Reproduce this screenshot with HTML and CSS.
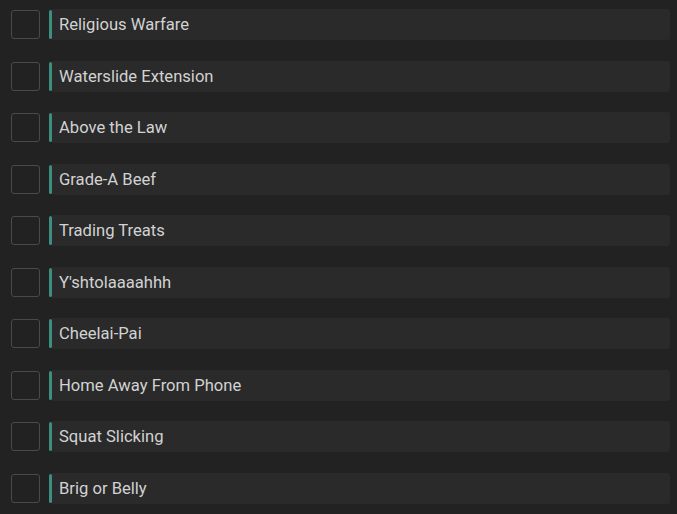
FILE: index.html
```html
<!DOCTYPE html>
<html>
<head>
<meta charset="utf-8">
<link rel="stylesheet" href="styles.css">
</head>
<body>
<ul class="list">
  <li class="row"><span class="check"></span><div class="card">Religious Warfare</div></li>
  <li class="row"><span class="check"></span><div class="card">Waterslide Extension</div></li>
  <li class="row"><span class="check"></span><div class="card">Above the Law</div></li>
  <li class="row"><span class="check"></span><div class="card">Grade-A Beef</div></li>
  <li class="row"><span class="check"></span><div class="card">Trading Treats</div></li>
  <li class="row"><span class="check"></span><div class="card">Y'shtolaaaahhh</div></li>
  <li class="row"><span class="check"></span><div class="card">Cheelai-Pai</div></li>
  <li class="row"><span class="check"></span><div class="card">Home Away From Phone</div></li>
  <li class="row"><span class="check"></span><div class="card">Squat Slicking</div></li>
  <li class="row"><span class="check"></span><div class="card">Brig or Belly</div></li>
</ul>
</body>
</html>
```
FILE: styles.css
```css
html, body {
  margin: 0;
  padding: 0;
  background: #222222;
}
body {
  font-family: Roboto, "Liberation Sans", sans-serif;
}
.list {
  list-style: none;
  margin: 0;
  padding: 9px 7px 0 11px;
  display: flex;
  flex-direction: column;
  gap: 20.5px;
}
.row {
  display: flex;
  align-items: center;
  height: 31px;
}
.check {
  box-sizing: border-box;
  width: 29px;
  height: 29px;
  border: 1px solid #4a4a4a;
  border-radius: 3px;
  margin-right: 12px;
  flex: none;
}
.card {
  flex: 1;
  box-sizing: border-box;
  height: 31px;
  background: #2a2a2a;
  border-radius: 0 3px 3px 0;
  padding-left: 7px;
  display: flex;
  align-items: center;
  color: #d2d2d2;
  font-size: 16.6px;
  position: relative;
}
.card::before {
  content: "";
  position: absolute;
  left: -3px;
  top: 1px;
  bottom: 1px;
  width: 3px;
  border-radius: 2px;
  background: #3d8f82;
}
```
